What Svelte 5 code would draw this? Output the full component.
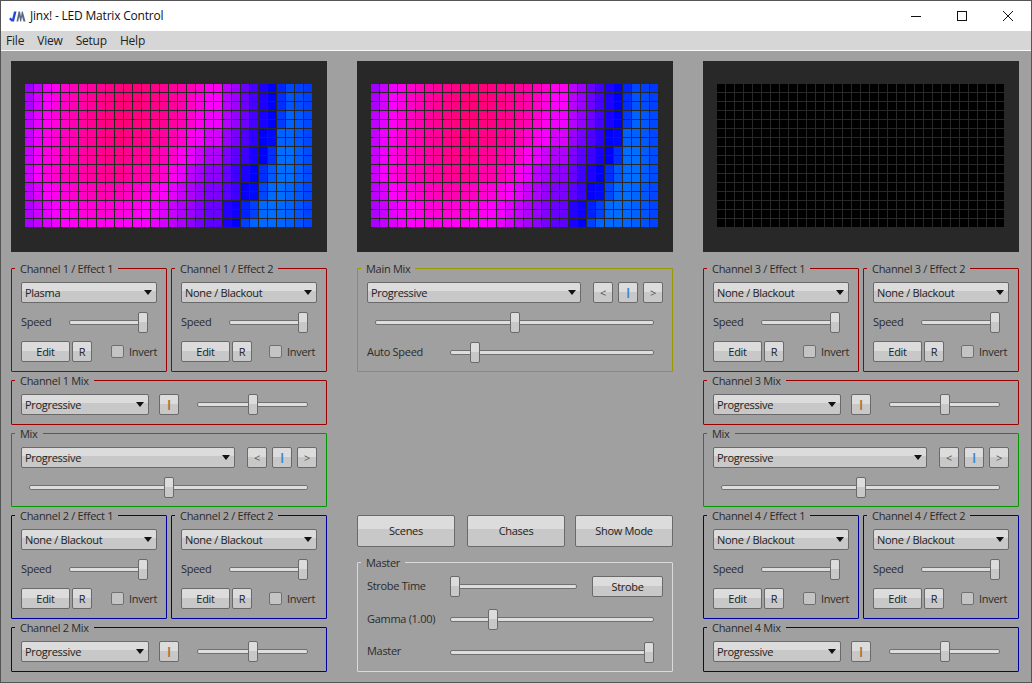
<script>
	// hue per 2-column block (left 22 columns) at a few rows of the plasma frame
	const hueRows = [
		[0, [277, 296, 311, 320, 326, 330, 332, 328, 324, 317, 304]],
		[5, [287, 304, 315, 322, 328, 332, 330, 327, 322, 309, 295]],
		[10, [289, 307, 315, 320, 324, 326, 320, 317, 304, 285, 274]],
		[13, [283, 296, 304, 311, 315, 313, 307, 299, 289, 280, 268]],
		[15, [280, 292, 300, 304, 304, 302, 300, 295, 285, 274, 262]]
	];
	// the blue band on the right moves column by column, so columns 22-31 get their own rows
	const blueRows = [
		[0, [285, 278, 265, 257, 247, 240, 231, 223, 225, 227]],
		[4, [283, 275, 266, 257, 246, 240, 226, 217, 219, 223]],
		[6, [277, 268, 259, 251, 240, 238, 217, 217, 219, 223]],
		[8, [270, 262, 255, 246, 240, 229, 214, 214, 218, 222]],
		[10, [265, 255, 247, 240, 229, 219, 214, 214, 218, 222]],
		[12, [262, 255, 242, 238, 223, 215, 214, 216, 219, 223]],
		[14, [249, 244, 232, 225, 215, 214, 215, 217, 220, 224]],
		[15, [246, 240, 225, 217, 215, 215, 216, 218, 221, 224]]
	];

	function lookup(table, r, read) {
		let i = 0;
		while (i < table.length - 2 && r > table[i + 1][0]) i++;
		const [r0, a] = table[i];
		const [r1, b] = table[i + 1];
		const t = (r - r0) / (r1 - r0);
		return read(a) + (read(b) - read(a)) * t;
	}

	function hueAt(col, row) {
		const r = Math.min(15, Math.floor((row + 1) / 2) * 2);
		if (col >= 22) return lookup(blueRows, r, (a) => a[col - 22]);
		const blk = Math.floor(col / 2);
		const next = Math.min(10, blk + 1);
		const f = col % 2 ? 0.5 : 0;
		return lookup(hueRows, r, (a) => a[blk] + (a[next] - a[blk]) * f);
	}

	const cells = [];
	for (let row = 0; row < 16; row++) {
		for (let col = 0; col < 32; col++) {
			cells.push(`hsl(${hueAt(col, row).toFixed(0)},100%,50%)`);
		}
	}
	const black = cells.map(() => '#000');

	const menus = ['File', 'View', 'Setup', 'Help'];
</script>

{#snippet matrix(colors)}
	<div class="preview">
		<div class="leds">
			{#each colors as c}
				<i style={`background:${c}`}></i>
			{/each}
		</div>
	</div>
{/snippet}

{#snippet combo(label, width)}
	<div class="combo" style={`width:${width}px`}>
		<span>{label}</span>
		<b></b>
	</div>
{/snippet}

{#snippet slider(width, value)}
	<div class="slider" style={`width:${width}px`}>
		<div class="track"></div>
		<div class="thumb" style={`left:${(width - 10) * value}px`}></div>
	</div>
{/snippet}

{#snippet effect(title, label, shift)}
	<div class="group effect {shift ? 'shift' : ''}">
		<span class="legend">{title}</span>
		{@render combo(label, 136)}
		<div class="row">
			<span class="lbl speed">Speed</span>
			{@render slider(79, 1)}
		</div>
		<div class="row edit-row">
			<button class="btn edit">Edit</button>
			<button class="btn small">R</button>
			<span class="check"></span>
			<span class="invert">Invert</span>
		</div>
	</div>
{/snippet}

{#snippet channelMix(title)}
	<div class="group mix-small">
		<span class="legend">{title}</span>
		<div class="row">
			{@render combo('Progressive', 128)}
			<button class="btn small pause orange">I</button>
			{@render slider(111, 0.5)}
		</div>
	</div>
{/snippet}

{#snippet navButtons()}
	<div class="nav">
		<button class="btn small arrow">&lt;</button>
		<button class="btn small pause blue">I</button>
		<button class="btn small arrow">&gt;</button>
	</div>
{/snippet}

{#snippet mixGroup()}
	<div class="group mix-big">
		<span class="legend">Mix</span>
		<div class="row between">
			{@render combo('Progressive', 214)}
			{@render navButtons()}
		</div>
		<div class="row indent">
			{@render slider(279, 0.5)}
		</div>
	</div>
{/snippet}

{#snippet channelColumn(a, b)}
	<div class="column">
		{@render matrix(a === 1 ? cells : black)}
		<div class="pair red">
			{@render effect(`Channel ${a} / Effect 1`, a === 1 ? 'Plasma' : 'None / Blackout', false)}
			{@render effect(`Channel ${a} / Effect 2`, 'None / Blackout', true)}
		</div>
		<div class="red">{@render channelMix(`Channel ${a} Mix`)}</div>
		<div class="green">{@render mixGroup()}</div>
		<div class="pair blue-line">
			{@render effect(`Channel ${b} / Effect 1`, 'None / Blackout', false)}
			{@render effect(`Channel ${b} / Effect 2`, 'None / Blackout', true)}
		</div>
		<div class="blue-line">{@render channelMix(`Channel ${b} Mix`)}</div>
	</div>
{/snippet}

<div class="window">
	<header class="titlebar">
		<svg class="logo" width="17" height="11" viewBox="0 0 17 11">
			<path d="M0 8l2.500 2.500h2.500l2.500-10h-2.500l-1.800 7.500-1.500-1.500z" fill="#2348d8" />
			<path d="M7.500 10.500l2-10h1.500l1 5 .8-5h1l2.700 10h-2l-1.500-5-.8 5h-1l-1-5-1 5z" fill="#5a6a84" />
		</svg>
		<span class="title">Jinx! - LED Matrix Control</span>
		<div class="controls">
			<svg width="10" height="10" viewBox="0 0 10 10"><path d="M0 5.500h10" stroke="#111" /></svg>
			<svg width="10" height="10" viewBox="0 0 10 10"><rect x=".5" y=".5" width="9" height="9" fill="none" stroke="#111" /></svg>
			<svg width="10" height="10" viewBox="0 0 10 10"><path d="M0 0l10 10M10 0L0 10" stroke="#111" /></svg>
		</div>
	</header>

	<nav class="menubar">
		{#each menus as m}
			<span>{m}</span>
		{/each}
	</nav>

	<main class="content">
		{@render channelColumn(1, 2)}

		<div class="column">
			{@render matrix(cells)}
			<div class="group main-mix olive">
				<span class="legend">Main Mix</span>
				<div class="row between">
					{@render combo('Progressive', 214)}
					{@render navButtons()}
				</div>
				<div class="row indent">
					{@render slider(279, 0.5)}
				</div>
				<div class="row auto">
					<span class="lbl wide">Auto Speed</span>
					{@render slider(204, 0.103)}
				</div>
			</div>

			<div class="big-buttons">
				<button class="btn big">Scenes</button>
				<button class="btn big mid">Chases</button>
				<button class="btn big last">Show Mode</button>
			</div>

			<div class="group master">
				<span class="legend">Master</span>
				<div class="row">
					<span class="lbl wide">Strobe Time</span>
					{@render slider(127, 0)}
					<button class="btn strobe">Strobe</button>
				</div>
				<div class="row">
					<span class="lbl wide">Gamma (1.00)</span>
					{@render slider(204, 0.196)}
				</div>
				<div class="row">
					<span class="lbl wide last-lbl">Master</span>
					{@render slider(204, 1)}
				</div>
			</div>
		</div>

		{@render channelColumn(3, 4)}
	</main>
</div>

<style>
	:global(body) {
		margin: 0;
		background: #a0a0a0;
	}

	.window {
		box-sizing: border-box;
		height: 683px;
		overflow: hidden;
		background: #a0a0a0;
		border: 1px solid #555;
		font-family: 'Open Sans', 'Noto Sans', sans-serif;
		font-size: 11px;
		letter-spacing: -0.3px;
		color: #2b2b2b;
	}

	.titlebar {
		display: flex;
		align-items: center;
		height: 30px;
		background: #fff;
		color: #111;
		font-size: 12px;
		letter-spacing: -0.2px;
	}

	.logo {
		margin-left: 8px;
		margin-top: 1px;
	}

	.title {
		margin-left: 4px;
		margin-top: -1px;
	}

	.controls {
		display: flex;
		gap: 36px;
		margin-left: auto;
		margin-right: 18px;
	}

	.controls svg {
		display: block;
	}

	.menubar {
		display: flex;
		align-items: center;
		gap: 13px;
		height: 19px;
		padding-left: 5px;
		background: #d6d6d6;
		border-bottom: 1px solid #fafafa;
		color: #222;
		font-size: 12px;
		letter-spacing: -0.2px;
	}

	.content {
		display: grid;
		grid-template-columns: repeat(3, 316px);
		column-gap: 30px;
		padding: 10px 0 0 10px;
	}

	.column {
		display: flex;
		flex-direction: column;
		gap: 8px;
	}

	.preview {
		box-sizing: border-box;
		height: 191px;
		margin-bottom: 8px;
		padding: 23px 0 0 14px;
		background: #282828;
	}

	.leds {
		display: grid;
		grid-template-columns: repeat(32, 8px);
		grid-auto-rows: 8px;
		gap: 1px;
	}

	.leds i {
		display: block;
	}

	.pair {
		display: flex;
		gap: 4px;
	}

	.group {
		position: relative;
		box-sizing: border-box;
		padding: 13px 9px 0;
		border: 1px solid currentColor;
		border-radius: 1px;
	}

	.red {
		color: #990000;
	}

	.green {
		color: #009900;
	}

	.blue-line {
		color: #000099;
	}

	.olive {
		color: #999900;
	}

	.legend {
		position: absolute;
		top: -8px;
		left: 3px;
		padding: 0 5px;
		background: #a0a0a0;
		color: #2b2b2b;
		line-height: 15px;
		white-space: nowrap;
	}

	.effect {
		width: 156px;
		height: 104px;
	}

	.mix-small {
		height: 45px;
	}

	.mix-big {
		height: 74px;
	}

	.main-mix {
		height: 104px;
	}

	.master {
		height: 110px;
		margin-top: 7px;
		color: #dadada;
		display: flex;
		flex-direction: column;
		gap: 12px;
	}

	.row {
		display: flex;
		align-items: center;
		color: #2b2b2b;
	}

	.effect > .row {
		margin-top: 9px;
	}

	.effect > .edit-row {
		margin-top: 8px;
	}

	.mix-small .slider {
		margin-left: 18px;
	}

	.mix-small .pause {
		margin-left: 10px;
	}

	.between {
		gap: 12px;
	}

	.nav {
		display: flex;
		gap: 5px;
	}

	.indent {
		margin-top: 9px;
		padding-left: 8px;
	}

	.auto {
		margin-top: 9px;
	}

	.lbl {
		margin-top: -2px;
	}

	.last-lbl {
		margin-top: -4px;
	}

	.speed {
		width: 48px;
	}

	.wide {
		width: 83px;
	}

	.combo {
		position: relative;
		display: flex;
		align-items: center;
		box-sizing: border-box;
		height: 21px;
		padding-left: 3px;
		border: 1px solid #6a6a6a;
		border-radius: 2px;
		background: linear-gradient(180deg, #dcdcdc 0 40%, #c8c8c8 40% 100%);
		color: #222;
	}

	.combo b {
		position: absolute;
		right: 4px;
		top: 7px;
		border-style: solid;
		border-width: 5px 4px 0;
		border-color: #111 transparent transparent;
	}

	.slider {
		position: relative;
		height: 21px;
		flex: none;
	}

	.track {
		position: absolute;
		left: 0;
		right: 0;
		top: 8px;
		height: 5px;
		box-sizing: border-box;
		border: 1px solid #707070;
		border-radius: 2px;
		background: #dedede;
	}

	.thumb {
		position: absolute;
		top: 0;
		box-sizing: border-box;
		width: 10px;
		height: 21px;
		border: 1px solid #6a6a6a;
		border-radius: 2px;
		background: linear-gradient(180deg, #dcdcdc 0 45%, #c8c8c8 45% 100%);
	}

	.btn {
		box-sizing: border-box;
		flex: none;
		height: 21px;
		padding: 0;
		border: 1px solid #6a6a6a;
		border-radius: 2px;
		background: linear-gradient(180deg, #dcdcdc 0 45%, #c8c8c8 45% 100%);
		font: inherit;
		letter-spacing: inherit;
		color: #222;
	}

	.edit {
		width: 49px;
	}

	.small {
		width: 20px;
	}

	.edit-row .small {
		margin-left: 2px;
	}

	.pause {
		font-size: 14px;
		font-weight: 600;
	}

	.orange {
		color: #b0702f;
	}

	.blue {
		color: #3f86d0;
	}

	.arrow {
		color: #555;
	}

	.check {
		flex: none;
		box-sizing: border-box;
		width: 13px;
		height: 13px;
		margin-left: 19px;
		border: 1px solid #707070;
		border-radius: 2px;
		background: #c4c4c4;
	}

	.shift .check {
		margin-left: 17px;
	}

	.invert {
		margin-left: 5px;
	}

	.big-buttons {
		display: flex;
		margin-top: auto;
	}

	.big {
		width: 98px;
		height: 32px;
		padding-bottom: 2px;
	}

	.mid {
		margin-left: 12px;
	}

	.last {
		margin-left: 10px;
	}

	.strobe {
		width: 71px;
		margin-left: 15px;
	}
</style>
